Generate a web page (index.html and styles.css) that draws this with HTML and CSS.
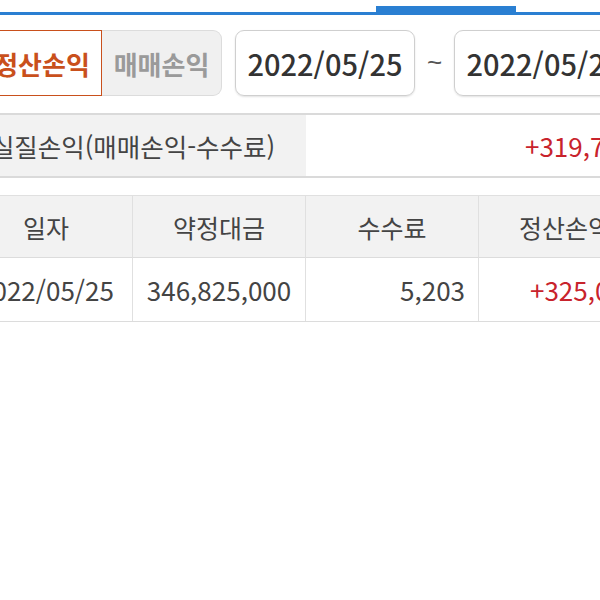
FILE: index.html
```html
<!DOCTYPE html>
<html lang="ko">
<head>
<meta charset="utf-8">
<link rel="stylesheet" href="styles.css">
</head>
<body>
<div class="page">
  <div class="tabs"><div class="tab-active"></div></div>
  <div class="toolbar">
    <div class="toggle">
      <div class="toggle-btn on">정산손익</div>
      <div class="toggle-btn off">매매손익</div>
    </div>
    <div class="date">2022/05/25</div>
    <div class="tilde">~</div>
    <div class="date">2022/05/25</div>
  </div>
  <div class="summary">
    <div class="sum-label">실질손익(매매손익-수수료)</div>
    <div class="sum-value">+319,797,797</div>
  </div>
  <div class="table">
    <div class="cell head">일자</div>
    <div class="cell head">약정대금</div>
    <div class="cell head">수수료</div>
    <div class="cell head">정산손익</div>
    <div class="cell num center">2022/05/25</div>
    <div class="cell num center">346,825,000</div>
    <div class="cell num right">5,203</div>
    <div class="cell num right red">+325,003,000</div>
  </div>
</div>
</body>
</html>
```
FILE: styles.css
```css
html, body {
  margin: 0;
  padding: 0;
  background: #fff;
  overflow: hidden;
}
body {
  font-family: "Noto Sans CJK KR", "Noto Sans", sans-serif;
  color: #444;
}
.page {
  margin-left: -40px;
  width: 692px;
}
.tabs {
  height: 12px;
  display: flex;
  align-items: flex-end;
  border-bottom: 3px solid #2a7fd2;
}
.tab-active {
  margin-left: 416px;
  width: 140px;
  height: 6px;
  background: #2a7fd2;
}
.toolbar {
  display: flex;
  align-items: center;
  padding: 15px 0 0 22px;
  height: 66px;
}
.toggle {
  display: flex;
  height: 66px;
}
.toggle-btn {
  width: 120px;
  box-sizing: border-box;
  display: flex;
  align-items: center;
  justify-content: center;
  font-size: 26px;
  font-weight: 700;
}
.toggle-btn.on {
  border: 1px solid #c9501c;
  color: #c9501c;
  background: #fff;
}
.toggle-btn.off {
  border: 1px solid #dcdcdc;
  border-left: none;
  border-radius: 0 9px 9px 0;
  background: #f0f0f0;
  color: #9a9a9a;
}
.date {
  margin-left: 13px;
  width: 180px;
  height: 66px;
  box-sizing: border-box;
  border: 1px solid #cfcfcf;
  border-radius: 9px;
  box-shadow: 0 1px 2px rgba(0,0,0,0.12);
  display: flex;
  align-items: center;
  justify-content: center;
  font-size: 29px;
  font-weight: 500;
  color: #333;
  flex-shrink: 0;
}
.tilde {
  width: 39px;
  text-align: center;
  font-family: "Liberation Sans", sans-serif;
  font-size: 26px;
  line-height: 1;
  color: #555;
  padding-bottom: 2px;
}
.tilde + .date {
  margin-left: 0;
}
.summary {
  margin-top: 17px;
  display: grid;
  grid-template-columns: 346px 346px;
  height: 65px;
  border-top: 2px solid #dadada;
  border-bottom: 2px solid #dadada;
  box-sizing: border-box;
}
.sum-label {
  background: #f2f2f2;
  display: flex;
  align-items: center;
  justify-content: center;
  font-size: 25.5px;
  color: #444;
}
.sum-value {
  display: flex;
  align-items: center;
  padding-left: 219px;
  font-size: 26px;
  color: #c8232c;
  white-space: nowrap;
}
.table {
  margin-top: 17px;
  display: grid;
  grid-template-columns: repeat(4, 173px);
  grid-template-rows: 62px 63px;
  border-top: 1px solid #e0e0e0;
  border-bottom: 1px solid #dcdcdc;
}
.cell {
  display: flex;
  align-items: center;
  border-right: 1px solid #e0e0e0;
  padding: 0 13px;
  box-sizing: border-box;
  white-space: nowrap;
  overflow: visible;
}
.cell.head {
  background: #f2f2f2;
  justify-content: center;
  font-size: 25px;
  color: #444;
  border-bottom: 1px solid #dcdcdc;
}
.cell.num {
  font-size: 26px;
  color: #444;
}
.cell.center { justify-content: center; }
.cell.right { justify-content: flex-end; }
.cell.red { color: #c8232c; justify-content: flex-start; padding-left: 51px; }
```
